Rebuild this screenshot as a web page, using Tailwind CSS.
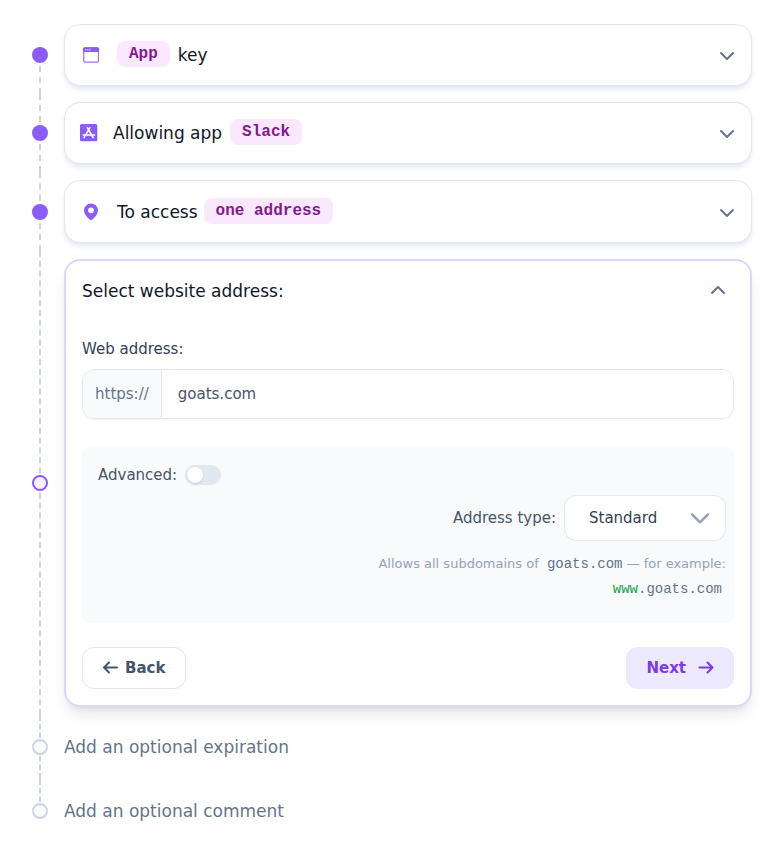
<!DOCTYPE html>
<html lang="en">
<head>
<meta charset="utf-8">
<meta name="viewport" content="width=device-width, initial-scale=1">
<title>Allow an app</title>
<script src="https://cdn.jsdelivr.net/npm/@tailwindcss/browser@4"></script>
</head>
<body class="bg-white font-['DejaVu_Sans',sans-serif] text-[15px] leading-6 text-[#475569]">
<main class="py-4 pl-8 pr-4">
<ol>
  <li class="flex gap-4">
    <div class="grid w-4 shrink-0 place-items-center">
      <div class="col-start-1 row-start-1 flex h-full flex-col">
        <span class="flex-1"></span>
        <span class="flex-1 border-l-2 border-dashed border-[#cbd5e1]"></span>
      </div>
      <span class="z-10 col-start-1 row-start-1 size-4 rounded-full bg-[#8b5cf6]"></span>
    </div>
    <div class="min-w-0 flex-1 py-2">
      <button type="button" class="flex h-[62px] w-full items-center rounded-2xl border border-slate-200 bg-white pl-[18px] pr-4 text-[17px] text-[#0f172a] shadow-md shadow-slate-200">
        <svg class="mr-[18px] size-4 shrink-0" viewBox="0 0 16 16" aria-hidden="true">
          <rect x=".7" y=".9" width="14.8" height="14.2" rx="1.400" fill="none" stroke="#9b74f7" stroke-width="1.300"/>
          <path d="M0 5V2A1.700 1.700 0 0 1 1.700.3h12.600A1.700 1.700 0 0 1 16 2v3z" fill="#8b5cf6"/>
          <path d="M2 2h1.300v1.500H2zm2.100 0h1.300v1.500H4.100zm2.100 0h1.300v1.500H6.200z" fill="#d0bdfb"/>
        </svg>
        <span class="mb-0.5 rounded-lg bg-fuchsia-100 px-3 py-px font-['Liberation_Mono',monospace] text-base font-bold leading-6 text-[#86198f]">App</span>
        <span class="ml-2">key</span>
        <svg class="ml-auto size-4 shrink-0 text-[#64748b]" viewBox="0 0 16 16" fill="none" stroke="currentColor" stroke-width="2" stroke-linecap="round" stroke-linejoin="round" aria-hidden="true"><path d="M2 6l6 6 6-6"/></svg>
      </button>
    </div>
  </li>

  <li class="flex gap-4">
    <div class="grid w-4 shrink-0 place-items-center">
      <div class="col-start-1 row-start-1 flex h-full flex-col">
        <span class="flex-1 border-l-2 border-dashed border-[#cbd5e1]"></span>
        <span class="flex-1 border-l-2 border-dashed border-[#cbd5e1]"></span>
      </div>
      <span class="z-10 col-start-1 row-start-1 size-4 rounded-full bg-[#8b5cf6]"></span>
    </div>
    <div class="min-w-0 flex-1 py-2">
      <button type="button" class="flex h-[62px] w-full items-center rounded-2xl border border-slate-200 bg-white pl-[15px] pr-4 text-[17px] text-[#0f172a] shadow-md shadow-slate-200">
        <svg class="mr-[15px] size-[18px] shrink-0" viewBox="0 0 18 18" fill="none" aria-hidden="true">
          <rect width="17.300" height="17.300" rx="1.600" fill="#8b5cf6"/>
          <path d="M7.500 3.800l5.600 9.700M9.800 3.800L5.400 11.300M3.200 11h7.300M12 11h2.600M4.600 12.700l-.5.900" stroke="#fff" stroke-width="1.600" stroke-linecap="round"/>
        </svg>
        <span>Allowing app</span>
        <span class="mb-0.5 ml-2 rounded-lg bg-fuchsia-100 px-3 py-px font-['Liberation_Mono',monospace] text-base font-bold leading-6 text-[#86198f]">Slack</span>
        <svg class="ml-auto size-4 shrink-0 text-[#64748b]" viewBox="0 0 16 16" fill="none" stroke="currentColor" stroke-width="2" stroke-linecap="round" stroke-linejoin="round" aria-hidden="true"><path d="M2 6l6 6 6-6"/></svg>
      </button>
    </div>
  </li>

  <li class="flex gap-4">
    <div class="grid w-4 shrink-0 place-items-center">
      <div class="col-start-1 row-start-1 flex h-full flex-col">
        <span class="flex-1 border-l-2 border-dashed border-[#cbd5e1]"></span>
        <span class="flex-1 border-l-2 border-dashed border-[#cbd5e1]"></span>
      </div>
      <span class="z-10 col-start-1 row-start-1 size-4 rounded-full bg-[#8b5cf6]"></span>
    </div>
    <div class="min-w-0 flex-1 py-2">
      <button type="button" class="flex h-[63px] w-full items-center rounded-2xl border border-slate-200 bg-white pl-[18px] pr-4 text-[17px] text-[#0f172a] shadow-md shadow-slate-200">
        <svg class="mr-[18px] h-[17px] w-4 shrink-0" viewBox="0 0 16 17" aria-hidden="true">
          <path d="M8 .5a7 7 0 0 0-7 7c0 3.400 2.600 6.300 5.700 8.900a2 2 0 0 0 2.600 0C12.400 13.800 15 10.900 15 7.500a7 7 0 0 0-7-7z" fill="#8b5cf6"/>
          <circle cx="8" cy="7.300" r="2.900" fill="#fff"/>
        </svg>
        <span>To access</span>
        <span class="mb-0.5 ml-1.5 rounded-lg bg-fuchsia-100 px-3 py-px font-['Liberation_Mono',monospace] text-base font-bold leading-6 text-[#86198f]">one address</span>
        <svg class="ml-auto size-4 shrink-0 text-[#64748b]" viewBox="0 0 16 16" fill="none" stroke="currentColor" stroke-width="2" stroke-linecap="round" stroke-linejoin="round" aria-hidden="true"><path d="M2 6l6 6 6-6"/></svg>
      </button>
    </div>
  </li>

  <li class="flex gap-4">
    <div class="grid w-4 shrink-0 place-items-center">
      <div class="col-start-1 row-start-1 flex h-full flex-col">
        <span class="flex-1 border-l-2 border-dashed border-[#cbd5e1]"></span>
        <span class="flex-1 border-l-2 border-dashed border-[#cbd5e1]"></span>
      </div>
      <span class="z-10 col-start-1 row-start-1 size-4 rounded-full border-2 border-[#8b5cf6] bg-violet-50"></span>
    </div>
    <div class="min-w-0 flex-1 py-2">
      <section class="rounded-2xl border-2 border-violet-200 bg-white shadow-lg">
        <button type="button" aria-expanded="true" class="flex w-full items-center justify-between py-[18px] pl-4 pr-6 text-[17px] text-[#0f172a]">
          <span>Select website address:</span>
          <svg class="size-4 text-[#64748b]" viewBox="0 0 16 16" fill="none" stroke="currentColor" stroke-width="2" stroke-linecap="round" stroke-linejoin="round" aria-hidden="true"><path d="M2 10l6-6 6 6"/></svg>
        </button>
        <form class="p-4">
          <label for="address" class="block text-[#334155]">Web address:</label>
          <div class="mt-2 flex h-[50px] overflow-hidden rounded-xl border border-slate-200 shadow-xs">
            <span class="flex items-center border-r border-slate-200 bg-slate-50 px-3 text-[#64748b]">https://</span>
            <input id="address" type="text" value="goats.com" class="min-w-0 flex-1 bg-white px-4 outline-none">
          </div>
          <div class="mt-7 rounded-lg bg-slate-50 pb-[22px] pl-4 pr-2 pt-4">
            <div class="flex items-center gap-2">
              <label for="advanced">Advanced:</label>
              <input id="advanced" type="checkbox" class="h-5 w-9 appearance-none rounded-full bg-slate-200 p-0.5 before:block before:size-4 before:rounded-full before:bg-white before:shadow-sm before:content-[''] checked:bg-violet-500 checked:before:translate-x-4">
            </div>
            <div class="mt-2 flex items-center justify-end gap-2">
              <label for="type">Address type:</label>
              <div class="relative">
                <select id="type" class="h-[46px] w-[162px] appearance-none rounded-xl border border-slate-200 bg-white pl-6 pr-12 text-[#334155]">
                  <option>Standard</option>
                </select>
                <svg class="pointer-events-none absolute right-4 top-3.5 size-5 text-[#94a3b8]" viewBox="0 0 20 20" fill="none" stroke="currentColor" stroke-width="2.500" stroke-linecap="round" stroke-linejoin="round" aria-hidden="true"><path d="M2.200 5.500l7.800 7.800 7.800-7.800"/></svg>
              </div>
            </div>
            <p class="mt-2.5 text-right text-[13px] leading-[25px] text-[#94a3b8]">Allows all subdomains of <code class="px-1 font-['Liberation_Mono',monospace] text-sm leading-none text-[#64748b]">goats.com</code>— for example:<br><code class="px-1 font-['Liberation_Mono',monospace] text-sm leading-none text-[#64748b]"><span class="text-[#16a34a]">www</span>.goats.com</code></p>
          </div>
          <div class="mt-6 flex justify-between font-bold">
            <button type="button" class="flex h-[42px] items-center gap-1.5 rounded-xl border border-gray-200 bg-white px-5">
              <svg class="size-4" viewBox="0 0 16 16" fill="none" stroke="currentColor" stroke-width="2" stroke-linecap="round" stroke-linejoin="round" aria-hidden="true"><path d="M14 7.500H1.500M6 2.500l-5 5 5 5"/></svg>
              Back
            </button>
            <button type="submit" class="flex h-[42px] items-center gap-3 rounded-xl bg-violet-100 px-5 text-[#7c3aed]">
              Next
              <svg class="size-4" viewBox="0 0 16 16" fill="none" stroke="currentColor" stroke-width="2" stroke-linecap="round" stroke-linejoin="round" aria-hidden="true"><path d="M1.500 7.500H14M9.500 2.500l5 5-5 5"/></svg>
            </button>
          </div>
        </form>
      </section>
    </div>
  </li>

  <li class="flex h-16 gap-4">
    <div class="grid w-4 shrink-0 place-items-center">
      <div class="col-start-1 row-start-1 flex h-full flex-col">
        <span class="flex-1 border-l-2 border-dashed border-[#cbd5e1]"></span>
        <span class="flex-1 border-l-2 border-dashed border-[#cbd5e1]"></span>
      </div>
      <span class="z-10 col-start-1 row-start-1 size-4 rounded-full border-2 border-[#cbd5e1] bg-slate-50"></span>
    </div>
    <div class="flex items-center text-[17px] text-[#64748b]">Add an optional expiration</div>
  </li>

  <li class="flex h-16 gap-4">
    <div class="grid w-4 shrink-0 place-items-center">
      <div class="col-start-1 row-start-1 flex h-full flex-col">
        <span class="flex-1 border-l-2 border-dashed border-[#cbd5e1]"></span>
        <span class="flex-1"></span>
      </div>
      <span class="z-10 col-start-1 row-start-1 size-4 rounded-full border-2 border-[#cbd5e1] bg-slate-50"></span>
    </div>
    <div class="flex items-center text-[17px] text-[#64748b]">Add an optional comment</div>
  </li>
</ol>
</main>
</body>
</html>
